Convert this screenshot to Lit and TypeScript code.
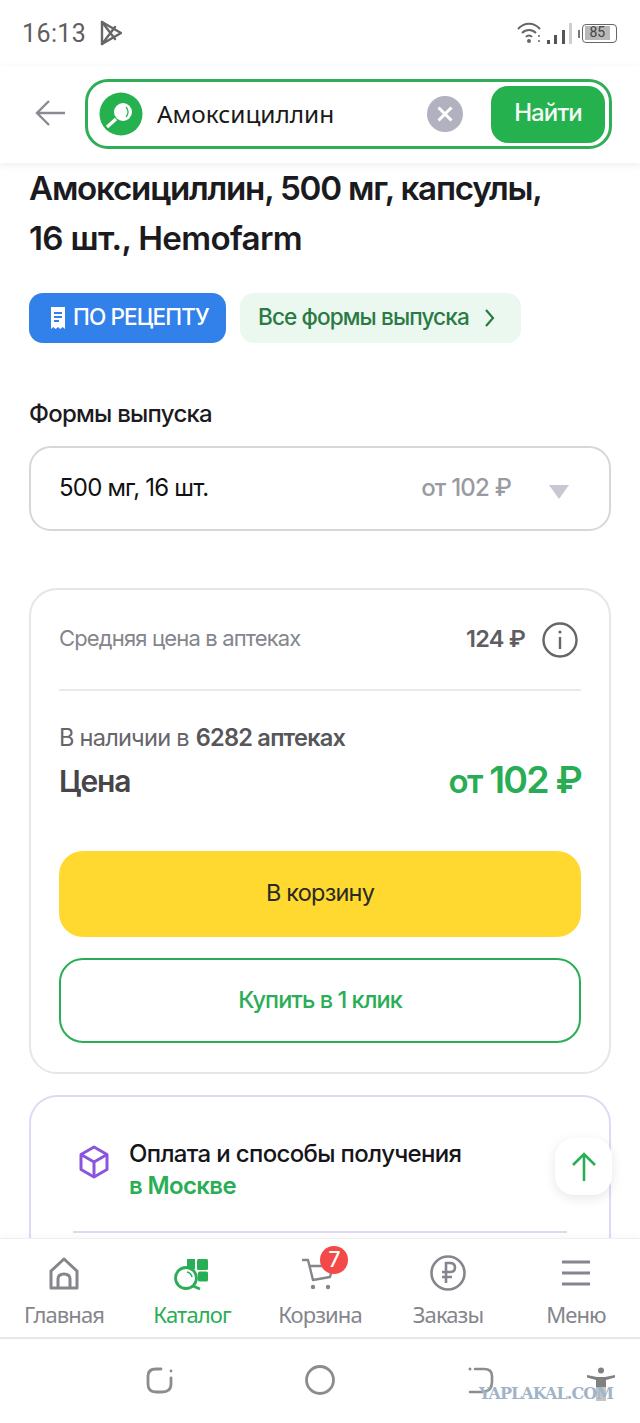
import { LitElement, html, css } from "lit";
import { customElement } from "lit/decorators.js";

@customElement("app-root")
export class AppRoot extends LitElement {
  static styles = css`
    :host { display: flex; flex-direction: column; position: relative; width: 640px; height: 1423px; overflow: hidden; background: #fff; font-family: Inter, "Noto Sans", sans-serif; color: #111; }
    * { box-sizing: border-box; }
    .status { height: 66px; flex: none; display: flex; align-items: center; justify-content: space-between; padding: 0 23px 0 22px; color: #666; }
    .status-left { display: flex; align-items: center; gap: 13px; font: 400 25px Roboto, sans-serif; letter-spacing: 0.4px; color: #5f5f5f; }
    .status-right { display: flex; align-items: center; gap: 2px; }
    .battery { width: 35px; height: 19px; border: 1.5px solid #666; border-radius: 4px; padding: 1.5px; display: flex; }
    .battery span { flex: 0 0 85%; background: #b8b8b8; font: 400 14px/13px Roboto, sans-serif; color: #444; text-align: center; }
    .header { height: 97px; flex: none; display: flex; align-items: flex-start; padding: 13px 29px 0 35px; gap: 20px; background: #fff; box-shadow: 0 2px 8px rgba(0,0,0,.07); z-index: 2; position: relative; }
    .back { margin-top: 20px; flex: none; }
    .search { flex: none; width: 527px; height: 70px; border: 3px solid #30ad57; border-radius: 23px; display: flex; align-items: center; padding: 0 4px 0 11px; }
    .search-logo { width: 44px; height: 44px; flex: none; }
    .search-text { font: 400 24.4px "Noto Sans", sans-serif; margin-left: 14px; margin-top: -2px; flex: 1; color: #1a1a1a; }
    .clear { width: 36px; height: 44px; flex: none; margin-right: 28px; }
    .find { width: 114px; height: 57px; border-radius: 17px; background: #26b14f; color: #f2fbf5; font: 500 24px Inter, sans-serif; letter-spacing: -0.9px; display: flex; align-items: center; justify-content: center; padding-bottom: 3px; flex: none; }
    .content { flex: 1; min-height: 0; overflow: hidden; padding: 0 29px; display: flex; flex-direction: column; }
    h1 { font: 600 33.2px/50px Inter, sans-serif; letter-spacing: -1.25px; margin: 0; padding-right: 30px; color: #1b1b1f; }
    h1 span { letter-spacing: -0.7px; }
    .chips { display: flex; gap: 14px; margin-top: 30px; }
    .chip { height: 50px; border-radius: 14px; display: flex; align-items: center; font: 500 22.6px Inter, sans-serif; letter-spacing: -0.9px; padding-bottom: 3px; }
    .chip svg { margin-top: 3px; }
    .chip.blue { width: 197px; background: #3280ea; color: #fff; padding-left: 21px; gap: 7px; }
    .chip.green { width: 281px; background: #ebf8ef; color: #2b7a45; padding-left: 18px; gap: 15px; }
    .section { font: 500 24px/28px Inter, sans-serif; letter-spacing: -0.75px; margin-top: 57px; color: #1b1b1f; }
    .select { height: 85px; margin-top: 18px; border: 2px solid #d6d6dc; border-radius: 22px; display: flex; align-items: center; padding: 0 40px 3px 28px; font: 400 24px Inter, sans-serif; letter-spacing: -0.8px; flex: none; }
    .select .name { flex: 1; }
    .select .price { color: #9a9aa2; font-weight: 500; letter-spacing: -0.8px; margin-right: 38px; }
    .tri { width: 0; height: 0; border-left: 10px solid transparent; border-right: 10px solid transparent; border-top: 14px solid #c8c8d3; margin-top: 9px; }
    .card { margin-top: 57px; border: 2px solid #e6e6ea; border-radius: 28px; height: 486px; flex: none; padding: 0 28px; display: flex; flex-direction: column; }
    .avg { height: 101px; flex: none; display: flex; align-items: center; border-bottom: 2px solid #e9e9ec; font: 400 22px Inter, sans-serif; letter-spacing: -0.85px; color: #85858d; padding-right: 3px; }
    .avg .label { flex: 1; padding-bottom: 3px; }
    .avg .val { color: #5e5e62; font-size: 23.5px; font-weight: 600; letter-spacing: -0.8px; margin-right: 17px; padding-bottom: 3px; }
    .stock { margin-top: 33px; font: 400 23.6px/28px Inter, sans-serif; letter-spacing: -0.78px; color: #66666b; display: flex; gap: 7px; }
    .stock b { font-weight: 600; color: #56565b; }
    .price-row { display: flex; justify-content: space-between; align-items: center; margin-top: 6px; height: 46px; }
    .price-row .l { font: 600 30px Inter, sans-serif; letter-spacing: -1.1px; color: #45454a; }
    .price-row .r { font: 600 37.5px Inter, sans-serif; letter-spacing: -1.8px; color: #28ad55; padding-bottom: 3px; }
    .price-row .r small { font-size: 33px; letter-spacing: -1.6px; }
    .buy { height: 86px; margin-top: 47px; border-radius: 24px; background: #ffd92f; display: flex; align-items: center; justify-content: center; padding-bottom: 3px; font: 400 23.5px Inter, sans-serif; letter-spacing: -0.8px; color: #2a2a24; flex: none; }
    .one { height: 85px; margin-top: 21px; border-radius: 24px; border: 2px solid #2aae55; display: flex; align-items: center; justify-content: center; padding-bottom: 3px; font: 500 23.5px Inter, sans-serif; letter-spacing: -0.95px; color: #2aae55; flex: none; }
    .card2 { margin-top: 21px; border: 2px solid #e2d8f3; border-radius: 28px 28px 0 0; border-bottom: 0; flex: none; height: 200px; padding: 0 42px; }
    .pay { display: flex; gap: 20px; padding-top: 41px; height: 136px; border-bottom: 2px solid #dfd8ee; }
    .pay svg { margin-top: 7px; margin-left: 6px; flex: none; }
    .pay .t { font: 500 24px/32px Inter, sans-serif; letter-spacing: -0.65px; color: #15151a; }
    .pay .t div + div { color: #2aae55; font-weight: 600; }
    .up { position: absolute; left: 555px; top: 1138px; width: 57px; height: 57px; background: #fff; border-radius: 19px; box-shadow: 0 3px 12px rgba(0,0,0,.1); display: flex; align-items: center; justify-content: center; }
    .tabs { height: 101px; flex: none; display: flex; background: #fff; border-top: 1px solid #f0f0f0; border-bottom: 2px solid #e6e6e8; position: relative; box-shadow: 0 -2px 6px rgba(0,0,0,.03); z-index: 2; }
    .tab { flex: 1; display: flex; flex-direction: column; align-items: center; padding-top: 12px; font: 400 22px "Noto Sans", sans-serif; letter-spacing: -0.9px; color: #85858d; position: relative; }
    .tab.on { color: #2aae55; }
    .tab svg { height: 44px; flex: none; margin-bottom: 4px; }
    .badge { position: absolute; left: 64px; top: 7px; width: 28px; height: 28px; border-radius: 50%; background: #f44949; color: #fff; font: 500 21px/27px Inter, sans-serif; text-align: center; }
    .nav { height: 84px; flex: none; display: flex; align-items: center; padding: 0 0 2px 146px; background: #fff; }
    .nav svg { flex: none; }
    .nav .n2 { margin-left: 131px; }
    .nav .n3 { margin-left: 133px; }
    .nav .n4 { margin-left: 92px; margin-top: 7px; }
    .wm { position: absolute; left: 479px; top: 1384px; font: 700 16px "DejaVu Serif", serif; letter-spacing: -0.95px; color: #9fb4c8; white-space: nowrap; }
  `;

  render() {
    return html`
      <div class="status">
        <div class="status-left">
          <span>16:13</span>
          <svg width="24" height="26" viewBox="0 0 24 26" fill="none" stroke="#666" stroke-width="2.4" stroke-linejoin="round" stroke-linecap="round"><path d="M3 2 L22 13 L3 24 Z"/><path d="M3 2 L16 19 M3 24 L16 7"/></svg>
        </div>
        <div class="status-right">
          <svg width="63" height="24" viewBox="0 0 63 24" fill="none" stroke="#666">
            <path d="M1 8 C7 1 17 1 23 8" stroke-width="2"/><path d="M5 12 C9 8 15 8 19 12" stroke-width="2"/><path d="M9 16 C10.500 14 13.500 14 15 16" stroke-width="2"/><circle cx="12" cy="20" r="2" fill="#666" stroke="none"/>
            <circle cx="22" cy="15" r="1" fill="#666" stroke="none"/><circle cx="22" cy="20" r="1" fill="#666" stroke="none"/>
            <rect x="30" y="19" width="3" height="4" fill="#555" stroke="none"/><rect x="37" y="14" width="3" height="9" fill="#555" stroke="none"/><rect x="45" y="9" width="3" height="14" fill="#555" stroke="none"/><rect x="52" y="2" width="3" height="21" fill="#cfcfcf" stroke="none"/>
            <rect x="61" y="9" width="2" height="8" fill="#777" stroke="none"/>
          </svg>
          <div class="battery"><span>85</span></div>
        </div>
      </div>
      <div class="header">
        <svg class="back" width="30" height="28" viewBox="0 0 30 28" fill="none" stroke="#8a8a92" stroke-width="2.4"><path d="M30 14 H2 M14 2 L2 14 L14 26"/></svg>
        <div class="search">
          <svg class="search-logo" viewBox="0 0 44 44"><circle cx="22" cy="22" r="21.500" fill="#26b14f"/><circle cx="24" cy="20" r="9" fill="#fff"/><path d="M17 27 L8 35" stroke="#fff" stroke-width="3.2"/><path d="M27 15 C29.500 18 29.500 22 27 25" stroke="#26b14f" fill="none" stroke-width="1.200"/></svg>
          <div class="search-text">Амоксициллин</div>
          <svg class="clear" viewBox="0 0 36 44"><circle cx="18" cy="22" r="18" fill="#b1b1c0"/><path d="M11.500 15.500 L24.500 28.500 M24.500 15.500 L11.500 28.500" stroke="#fff" stroke-width="3"/></svg>
          <div class="find">Найти</div>
        </div>
      </div>
      <div class="content">
        <h1>Амоксициллин, 500 мг, капсулы,<br><span>16 шт., Hemofarm</span></h1>
        <div class="chips">
          <div class="chip blue">
            <svg width="16" height="24" viewBox="0 0 16 24"><path d="M1 1 H15 V23 L12.700 21 L10.300 23 L8 21 L5.700 23 L3.300 21 L1 23 Z" fill="#fff"/><path d="M4 7 H12 M4 11 H12 M4 15 H9" stroke="#3280ea" stroke-width="1.800"/></svg>
            <span>ПО РЕЦЕПТУ</span>
          </div>
          <div class="chip green">
            <span>Все формы выпуска</span>
            <svg width="11" height="18" viewBox="0 0 11 18" fill="none" stroke="#2b7a45" stroke-width="2.200"><path d="M2 1 L9 9 L2 17"/></svg>
          </div>
        </div>
        <div class="section">Формы выпуска</div>
        <div class="select">
          <span class="name">500 мг, 16 шт.</span>
          <span class="price">от 102 ₽</span>
          <span class="tri"></span>
        </div>
        <div class="card">
          <div class="avg">
            <span class="label">Средняя цена в аптеках</span>
            <span class="val">124 ₽</span>
            <svg width="36" height="36" viewBox="0 0 36 36" fill="none" stroke="#66666a" stroke-width="2.400"><circle cx="18" cy="18" r="16.500"/><path d="M18 15 V27"/><circle cx="18" cy="10" r="1.600" fill="#66666a" stroke="none"/></svg>
          </div>
          <div class="stock"><span>В наличии в</span><b>6282 аптеках</b></div>
          <div class="price-row"><span class="l">Цена</span><span class="r"><small>от</small> 102 ₽</span></div>
          <div class="buy">В корзину</div>
          <div class="one">Купить в 1 клик</div>
        </div>
        <div class="card2">
          <div class="pay">
            <svg width="30" height="34" viewBox="0 0 30 34" fill="none" stroke="#8a54de" stroke-width="3" stroke-linejoin="round"><path d="M15 2 L28 9.500 V24.500 L15 32 L2 24.500 V9.500 Z"/><path d="M2 9.500 L15 17 L28 9.500 M15 17 V32"/></svg>
            <div class="t"><div>Оплата и способы получения</div><div>в Москве</div></div>
          </div>
        </div>
      </div>
      <div class="tabs">
        <div class="tab">
          <svg width="32" viewBox="0 0 32 44" fill="none" stroke="#85858d" stroke-width="3" stroke-linejoin="round"><path d="M3 37 V20 L16 8 L29 20 V37 Z"/><path d="M10 37 V28 Q10 23 16 23 Q22 23 22 28 V37"/></svg>
          <span>Главная</span>
        </div>
        <div class="tab on">
          <svg width="36" viewBox="0 0 36 44"><path d="M13 8 H21 V18 H13 Z" fill="#2aae55"/><rect x="23" y="8" width="11" height="11" rx="1.500" fill="#2aae55"/><rect x="24" y="20.500" width="10" height="10" rx="1.500" fill="#2aae55"/><circle cx="12" cy="27" r="10.500" fill="#fff" stroke="#2aae55" stroke-width="2.800"/><path d="M19 35 L26 38" stroke="#2aae55" stroke-width="2.800"/><path d="M13 21 Q17 22 18 26" stroke="#2aae55" fill="none" stroke-width="1.500"/></svg>
          <span>Каталог</span>
        </div>
        <div class="tab">
          <svg width="36" viewBox="0 0 36 44" fill="none" stroke="#85858d" stroke-width="2.400" stroke-linejoin="round"><path d="M0 9 H6 L11 29 L28 26 L31 15 H8"/><circle cx="11" cy="36" r="2.200" fill="#85858d" stroke="none"/><circle cx="26" cy="36" r="2.200" fill="#85858d" stroke="none"/></svg>
          <div class="badge">7</div>
          <span>Корзина</span>
        </div>
        <div class="tab">
          <svg width="36" viewBox="0 0 36 44" fill="none" stroke="#85858d" stroke-width="2.600"><circle cx="18" cy="22" r="16.500"/><path d="M16 32 V12 H20 Q25 12 25 16.500 Q25 21 20 21 H12 M12 26 H22"/></svg>
          <span>Заказы</span>
        </div>
        <div class="tab">
          <svg width="30" viewBox="0 0 30 44" fill="none" stroke="#85858d" stroke-width="3"><path d="M1 11 H29 M1 22 H29 M1 33 H29"/></svg>
          <span>Меню</span>
        </div>
      </div>
      <div class="nav">
        <svg width="28" height="28" viewBox="0 0 28 28" fill="none" stroke="#8c8c8c" stroke-width="2.800" stroke-linecap="round"><path d="M15 3 H10 Q2 3 2 10 V18 Q2 26 10 26 H16 Q25 26 25 18 V12"/><circle cx="25" cy="5" r="1.400" fill="#8c8c8c" stroke="none"/></svg>
        <svg class="n2" width="30" height="30" viewBox="0 0 30 30" fill="none" stroke="#8c8c8c" stroke-width="2.800"><circle cx="15" cy="15" r="13.500"/></svg>
        <svg class="n3" width="26" height="28" viewBox="0 0 26 28" fill="none" stroke="#8c8c8c" stroke-width="2.600" stroke-linecap="round"><path d="M7 3 H16 Q24 3 24 10 V16 Q24 25 15 26 H2"/><circle cx="2" cy="3" r="1.500" fill="#8c8c8c" stroke="none"/></svg>
        <svg class="n4" width="30" height="34" viewBox="0 0 30 34"><circle cx="15" cy="3.500" r="3" fill="#808080"/><path d="M1 8 L11 10 H19 L29 8 V10.500 L20 13 V20 H10 V13 L1 10.500 Z" fill="#808080"/><path d="M10 20 H20 V34 H10 Z" fill="#c4c4c4"/></svg>
      </div>
      <div class="up"><svg width="26" height="30" viewBox="0 0 26 30" fill="none" stroke="#2aae55" stroke-width="2.600"><path d="M13 29 V2 M2 13 L13 2 L24 13"/></svg></div>
      <div class="wm">YAPLAKAL.COM</div>
    `;
  }
}
